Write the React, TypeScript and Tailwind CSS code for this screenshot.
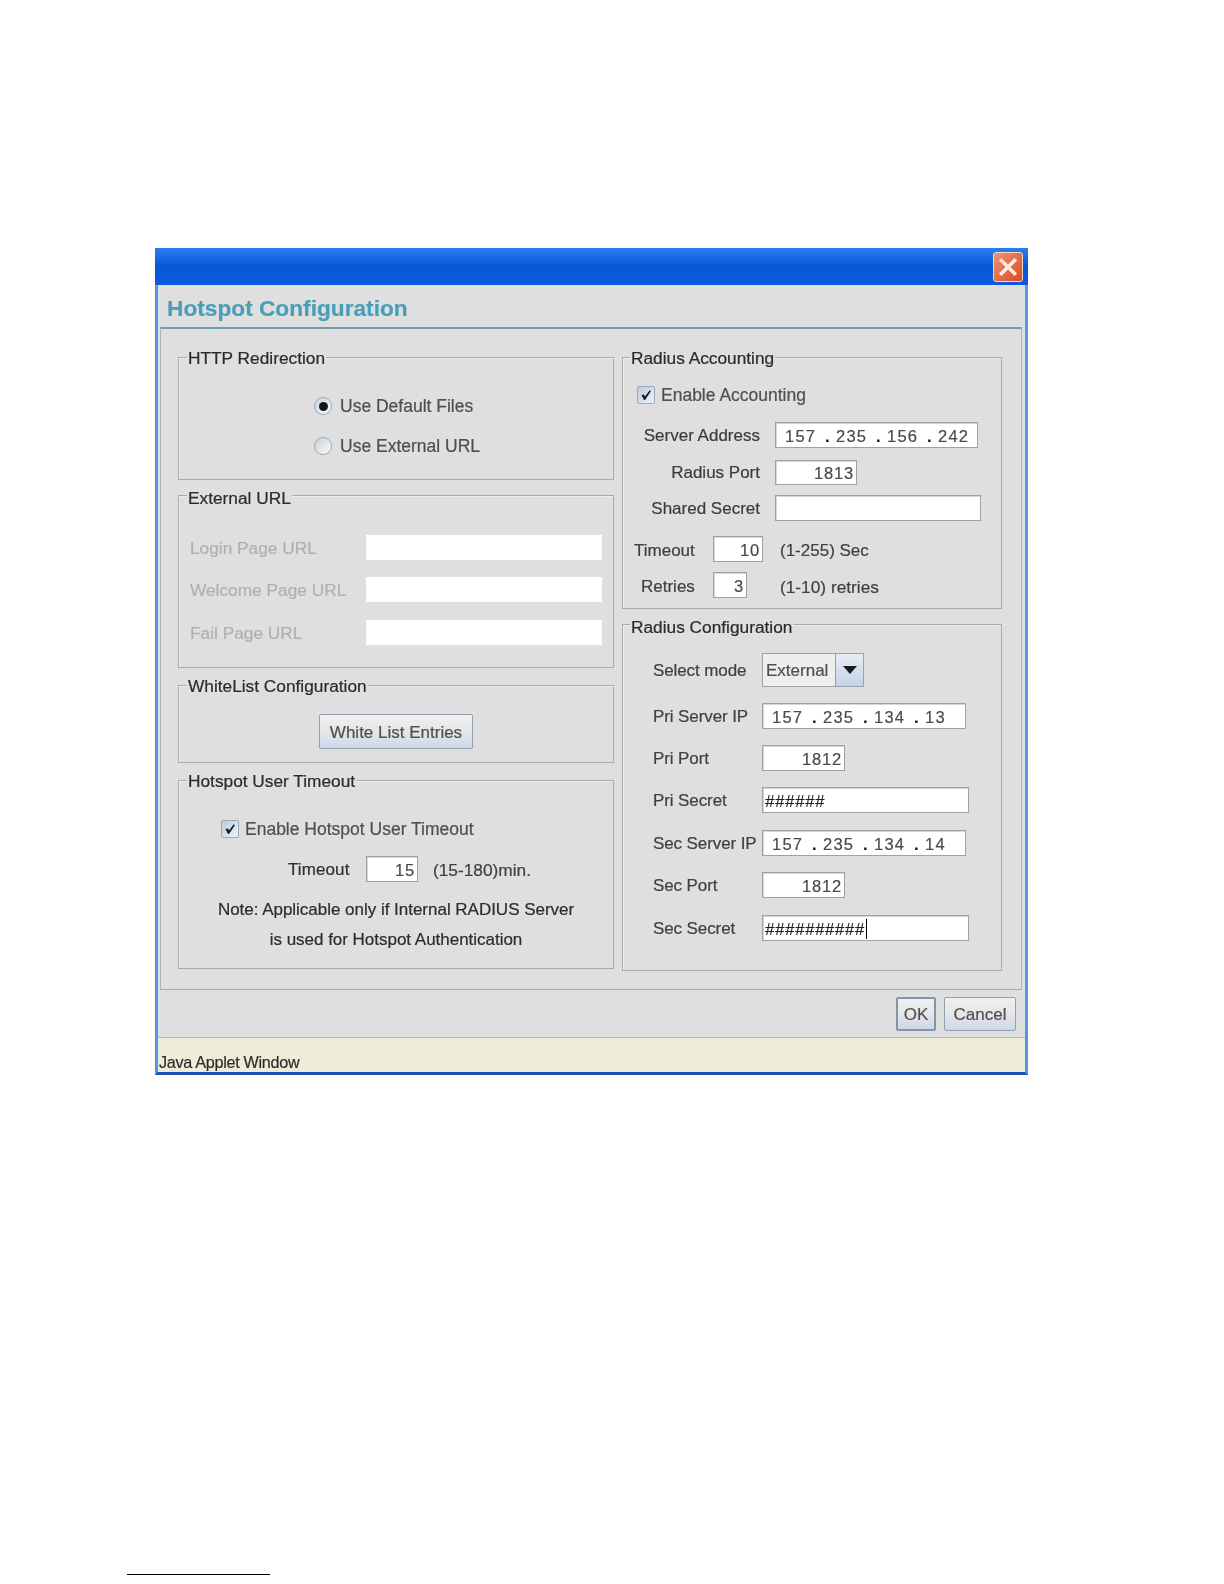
import React from "react";

const font = "[font-family:'Liberation_Sans',Arial,sans-serif]";

function Group({ title, className, titleClass = "left-[8px] top-[-11px]", children }: { title: string; className: string; titleClass?: string; children: React.ReactNode }) {
  return (
    <div className={`relative border border-[#a9adad] shadow-[inset_1px_1px_0_#ececec] ${className}`}>
      <span className={`absolute bg-[#dfdfdf] px-[1px] text-[17.3px] leading-[22px] text-[#2a2a2a] ${titleClass}`}>{title}</span>
      {children}
    </div>
  );
}

function Field({ className, children, align = "right" }: { className: string; children?: React.ReactNode; align?: "right" | "left" }) {
  return (
    <div
      className={`flex shrink-0 items-center border border-[#9aa3a8] bg-white pt-[1px] text-[16.5px] leading-[20px] tracking-[0.8px] text-[#4a4a4a] shadow-[inset_1px_1px_0_#d5d8da] ${
        align === "right" ? "justify-end pr-[2px]" : "justify-start pl-[2px]"
      } ${className}`}
    >
      {children}
    </div>
  );
}

function Ip({ parts, className }: { parts: string[]; className: string }) {
  return (
    <div className={`flex shrink-0 items-center border border-[#9aa3a8] bg-white pl-[9px] pt-[1px] text-[16.5px] leading-[20px] tracking-[1.2px] text-[#4a4a4a] shadow-[inset_1px_1px_0_#d5d8da] ${className}`}>
      {parts.map((p, i) => (
        <div key={i} className="flex w-[51px] shrink-0">
          <span className="w-[40px]">{p}</span>
          {i < 3 && <span className="font-bold text-[#222]">.</span>}
        </div>
      ))}
    </div>
  );
}

function Check({ label }: { label: string }) {
  return (
    <div className="flex h-[18px] items-center gap-[6px]">
      <div className="flex h-[18px] w-[18px] items-center justify-center rounded-[2px] border border-[#9aaabb] bg-gradient-to-br from-[#bccbdc] to-[#f0f3f6]">
        <svg viewBox="0 0 12 12" className="h-[12px] w-[12px]">
          <path d="M1.5 6 L4 5.5 L5 7.5 L9.5 1.5 L11 2 L5 11 L4 11 Z" fill="#141a22" />
        </svg>
      </div>
      <span className="text-[17.5px] leading-[20px] text-[#4f4f4f]">{label}</span>
    </div>
  );
}

function Radio({ label, checked }: { label: string; checked?: boolean }) {
  return (
    <div className="flex h-[20px] items-center gap-[8px]">
      <div className="flex h-[18px] w-[18px] items-center justify-center rounded-full border border-[#9aa8b6] bg-gradient-to-br from-[#c4ced9] to-[#ffffff]">
        {checked && <div className="h-[9px] w-[9px] rounded-full bg-[#161616]" />}
      </div>
      <span className="text-[17.5px] leading-[20px] text-[#4f4f4f]">{label}</span>
    </div>
  );
}

function ConfigRow({ label, className, children }: { label: string; className: string; children: React.ReactNode }) {
  return (
    <div className={`flex items-center ${className}`}>
      <span className="w-[109px] shrink-0 whitespace-nowrap pt-[2px] text-[17px] leading-[20px] tracking-[-0.1px] text-[#404040]">{label}</span>
      {children}
    </div>
  );
}

function AcctRow({ label, className, children }: { label: string; className: string; children: React.ReactNode }) {
  return (
    <div className={`flex items-center ${className}`}>
      <span className="w-[137px] shrink-0 pt-[1px] text-right text-[17px] leading-[20px] text-[#3c3c3c]">{label}</span>
      <div className="w-[15px] shrink-0" />
      {children}
    </div>
  );
}

function UrlRow({ label, className }: { label: string; className: string }) {
  return (
    <div className={`flex h-[25px] items-center ${className}`}>
      <span className="w-[176px] shrink-0 text-[17.3px] leading-[20px] text-[#b0b0b0]">{label}</span>
      <div className="h-[25px] w-[236px] bg-white" />
    </div>
  );
}

function SysButton({ className, children }: { className: string; children: React.ReactNode }) {
  return (
    <button className={`flex items-center justify-center rounded-[2px] border border-[#8fa0b0] bg-gradient-to-b from-[#f0f0f0] via-[#e6e6e8] to-[#ccd8ea] pt-[2px] text-[17px] leading-[20px] text-[#4f4f4f] ${className}`}>
      {children}
    </button>
  );
}

export default function App() {
  return (
    <div className={`relative h-[1584px] w-[1224px] overflow-hidden bg-white ${font}`}>
      <div className="pl-[155px] pt-[248px]">
        <div className="h-[827px] w-[873px] blur-[0.6px] [-webkit-text-stroke:0.2px_currentColor]">
          <div className="flex h-[37px] items-center justify-end bg-gradient-to-b from-[#2a7df2] via-[#0757d8] to-[#0b5ae0] pr-[5px]">
            <div className="flex h-[30px] w-[30px] items-center justify-center rounded-[3px] border border-[#f4d8c8] bg-gradient-to-br from-[#f09070] to-[#d84a20]">
              <svg viewBox="0 0 20 20" className="h-[22px] w-[22px]">
                <path d="M4 4 L16 16 M16 4 L4 16" stroke="#ffecdf" strokeWidth="3.2" strokeLinecap="square" />
              </svg>
            </div>
          </div>
          <div className="flex h-[790px] flex-col border-x-[3px] border-b-[3px] border-x-[#5a92e4] border-b-[#1f4fb0] bg-[#dfdfdf]">
            <div className="flex h-[42px] shrink-0 items-center pl-[9px] pt-[3px]">
              <span className="text-[22.7px] leading-[30px] font-bold text-[#4a9fb8]">Hotspot Configuration</span>
            </div>
            <div className="ml-[2px] mr-[3px] flex h-[663px] shrink-0 gap-[8px] border-x border-b border-t-2 border-x-[#b0b4b4] border-b-[#a6aaaa] border-t-[#6b9fb2] pl-[17px] pt-[28px]">
              <div className="w-[436px] shrink-0">
                <Group title="HTTP Redirection" className="h-[123px]">
                  <div className="flex flex-col gap-[20px] pl-[135px] pt-[38px]">
                    <Radio label="Use Default Files" checked />
                    <Radio label="Use External URL" />
                  </div>
                </Group>
                <Group title="External URL" className="mt-[15px] h-[173px]" titleClass="left-[8px] top-[-9px]">
                  <div className="pl-[11px] pt-[39px]">
                    <UrlRow label="Login Page URL" className="" />
                    <UrlRow label="Welcome Page URL" className="mt-[17px]" />
                    <UrlRow label="Fail Page URL" className="mt-[18px]" />
                  </div>
                </Group>
                <Group title="WhiteList Configuration" className="mt-[17px] h-[78px]">
                  <div className="flex justify-center pt-[28px]">
                    <SysButton className="h-[35px] w-[154px]">White List Entries</SysButton>
                  </div>
                </Group>
                <Group title="Hotspot User Timeout" className="mt-[17px] h-[189px]">
                  <div className="pl-[42px] pt-[39px]">
                    <Check label="Enable Hotspot User Timeout" />
                  </div>
                  <div className="mt-[18px] flex items-center pl-[109px]">
                    <span className="w-[78px] pt-[2px] text-[17px] leading-[20px] tracking-[0.1px] text-[#303030]">Timeout</span>
                    <Field className="h-[26px] w-[52px]">15</Field>
                    <span className="ml-[15px] pt-[2px] text-[17.3px] leading-[20px] text-[#404040]">(15-180)min.</span>
                  </div>
                  <div className="mt-[13px] text-center text-[17px] leading-[30px] tracking-[-0.02px] text-[#2c2c2c]">
                    <div>Note: Applicable only if Internal RADIUS Server</div>
                    <div>is used for Hotspot Authentication</div>
                  </div>
                </Group>
              </div>
              <div className="w-[380px] shrink-0">
                <Group title="Radius Accounting" className="h-[252px]" titleClass="left-[7px] top-[-11px]">
                  <div className="pl-[14px] pt-[28px]">
                    <Check label="Enable Accounting" />
                  </div>
                  <AcctRow label="Server Address" className="mt-[18px]">
                    <Ip parts={["157", "235", "156", "242"]} className="h-[26px] w-[203px]" />
                  </AcctRow>
                  <AcctRow label="Radius Port" className="mt-[12px]">
                    <Field className="h-[25px] w-[82px]">1813</Field>
                  </AcctRow>
                  <AcctRow label="Shared Secret" className="mt-[10px]">
                    <Field className="h-[26px] w-[206px]" />
                  </AcctRow>
                  <div className="mt-[15px] flex items-center pl-[11px]">
                    <span className="w-[79px] pt-[3px] text-[17px] leading-[20px] text-[#404040]">Timeout</span>
                    <Field className="h-[26px] w-[50px]">10</Field>
                    <span className="ml-[17px] pt-[3px] text-[17px] leading-[20px] text-[#404040]">(1-255) Sec</span>
                  </div>
                  <div className="mt-[10px] flex items-center pl-[18px]">
                    <span className="w-[72px] pt-[3px] text-[17px] leading-[20px] text-[#404040]">Retries</span>
                    <Field className="h-[26px] w-[34px]">3</Field>
                    <span className="ml-[33px] pt-[3px] text-[17.3px] leading-[20px] text-[#404040]">(1-10) retries</span>
                  </div>
                </Group>
                <Group title="Radius Configuration" className="mt-[15px] h-[347px]" titleClass="left-[7px] top-[-9px]">
                  <div className="pl-[30px] pt-[28px]">
                    <ConfigRow label="Select mode" className="">
                      <div className="flex h-[34px] w-[102px] border border-[#9aa3a8] bg-[#eeeeee]">
                        <span className="flex w-[73px] items-center border-r border-[#8fa0b0] pl-[3px] pt-[1px] text-[17px] leading-[20px] text-[#4f4f4f]">External</span>
                        <div className="flex flex-1 items-center justify-center bg-gradient-to-b from-[#e8edf3] to-[#c3d3e8]">
                          <svg viewBox="0 0 14 8" className="h-[8px] w-[14px]">
                            <path d="M0 0 H14 L7 8 Z" fill="#1a1a1a" />
                          </svg>
                        </div>
                      </div>
                    </ConfigRow>
                    <ConfigRow label="Pri Server IP" className="mt-[16px]">
                      <Ip parts={["157", "235", "134", "13"]} className="h-[26px] w-[204px]" />
                    </ConfigRow>
                    <ConfigRow label="Pri Port" className="mt-[16px]">
                      <Field className="h-[26px] w-[83px]">1812</Field>
                    </ConfigRow>
                    <ConfigRow label="Pri Secret" className="mt-[16px]">
                      <Field className="h-[26px] w-[207px] italic tracking-[-0.8px] text-[#222]" align="left">######</Field>
                    </ConfigRow>
                    <ConfigRow label="Sec Server IP" className="mt-[17px]">
                      <Ip parts={["157", "235", "134", "14"]} className="h-[26px] w-[204px]" />
                    </ConfigRow>
                    <ConfigRow label="Sec Port" className="mt-[16px]">
                      <Field className="h-[26px] w-[83px]">1812</Field>
                    </ConfigRow>
                    <ConfigRow label="Sec Secret" className="mt-[17px]">
                      <Field className="h-[26px] w-[207px] italic tracking-[-0.8px] text-[#222]" align="left">
                        ##########<span className="ml-[1px] h-[20px] w-px bg-black" />
                      </Field>
                    </ConfigRow>
                  </div>
                </Group>
              </div>
            </div>
            <div className="flex h-[48px] shrink-0 items-start justify-end gap-[8px] border-b border-[#b8b8b0] pr-[9px] pt-[7px]">
              <SysButton className="h-[34px] w-[40px] border-2 border-[#8396a8]">OK</SysButton>
              <SysButton className="h-[34px] w-[72px]">Cancel</SysButton>
            </div>
            <div className="flex h-[34px] items-end bg-[#efebd9] pl-[1px] text-[16.2px] tracking-[-0.3px] text-[#2c2c2c]">
              <span className="-mb-[2px]">Java Applet Window</span>
            </div>
          </div>
        </div>
      </div>
      <div className="absolute left-[127px] top-[1574px] h-px w-[143px] bg-black" />
    </div>
  );
}
